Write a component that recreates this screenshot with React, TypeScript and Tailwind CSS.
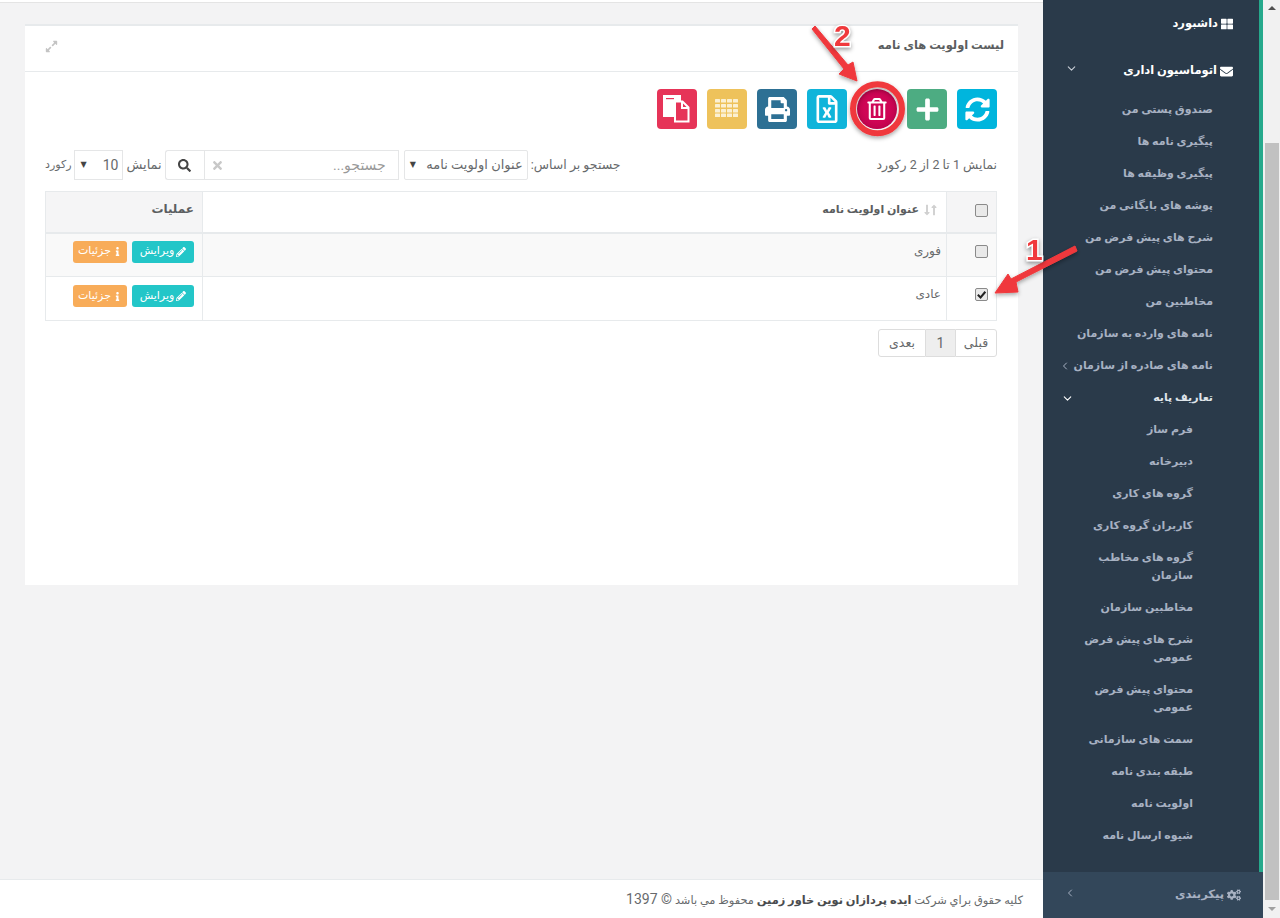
import React from "react";
import { FaSyncAlt, FaPlus, FaRegTrashAlt, FaRegFileExcel, FaPrint, FaThLarge, FaEnvelope, FaPencilAlt, FaInfo, FaCogs, FaSearch, FaTimes, FaExpandAlt, FaLongArrowAltDown, FaLongArrowAltUp } from "react-icons/fa";
import { ChevronDown, ChevronLeft } from "lucide-react";

const font = "font-['Roboto','DejaVu_Sans',sans-serif]";

const sub1 = ["صندوق پستی من", "پیگیری نامه ها", "پیگیری وظیفه ها", "پوشه های بایگانی من", "شرح های پیش فرض من", "محتوای پیش فرض من", "مخاطبین من", "نامه های وارده به سازمان"];
const sub2 = ["فرم ساز", "دبیرخانه", "گروه های کاری", "کاربران گروه کاری", "گروه های مخاطب سازمان", "مخاطبین سازمان", "شرح های پیش فرض عمومی", "محتوای پیش فرض عمومی", "سمت های سازمانی", "طبقه بندی نامه", "اولویت نامه", "شیوه ارسال نامه"];

function SideItem({ label, pr }: { label: string; pr: string }) {
  return (
    <div className={`${pr} py-[7px] pl-[28px] text-[11px] leading-[18px] font-bold text-[#a7b1c2]`}>
      {label}
    </div>
  );
}

function Sidebar() {
  return (
    <aside className="flex h-full w-[220px] shrink-0 flex-col bg-[#2a3a4a]">
      <div className="flex-1 border-r-[4px] border-[#26a98c] pt-[15px]">
        <div className="flex h-[18px] items-center gap-[3px] pr-[26px] text-[11.5px] font-bold text-white">
          <FaThLarge className="text-[12px]" />
          <span>داشبورد</span>
        </div>
        <div className="mt-[29px] flex h-[18px] items-center gap-[3px] pr-[26px] text-[11.5px] font-bold text-white">
          <FaEnvelope className="text-[13px]" />
          <span>اتوماسیون اداری</span>
          <ChevronDown className="mr-auto ml-[22px] h-[13px] w-[13px] -translate-y-[3px] text-[#c8ced6]" />
        </div>
        <div className="mt-[14px]">
          {sub1.map((s) => (
            <SideItem key={s} label={s} pr="pr-[46px]" />
          ))}
          <div className="flex items-center py-[7px] pr-[46px] pl-[16px] text-[11px] leading-[18px] font-bold whitespace-nowrap text-[#a7b1c2]">
            <span>نامه های صادره از سازمان</span>
            <ChevronLeft className="mr-auto h-[12px] w-[12px]" />
          </div>
          <div className="flex items-center py-[7px] pr-[46px] pl-[18px] text-[11px] leading-[18px] font-bold text-[#dfe4ea]">
            <span>تعاریف پایه</span>
            <ChevronDown className="mr-auto h-[13px] w-[13px] text-white" />
          </div>
          {sub2.map((s) => (
            <SideItem key={s} label={s} pr="pr-[66px]" />
          ))}
        </div>
      </div>
      <div className="flex h-[46px] shrink-0 items-center gap-[3px] bg-[#33475a] pr-[22px] pl-[21px] text-[11.5px] font-bold text-[#a7b1c2]">
        <FaCogs className="text-[14px]" />
        <span>پیکربندی</span>
        <ChevronLeft className="mr-auto h-[12px] w-[12px] -translate-y-[2px]" />
      </div>
    </aside>
  );
}

function Tool({ bg, children }: { bg: string; children: React.ReactNode }) {
  return <div className={`${bg} flex h-10 w-10 items-center justify-center text-[25px] text-white`}>{children}</div>;
}

function Box({ className, children }: { className: string; children?: React.ReactNode }) {
  return <div className={`flex h-[30px] items-center border border-[#e5e6e7] bg-white ${className}`}>{children}</div>;
}

function Check({ on }: { on?: boolean }) {
  return (
    <span className="inline-flex h-[13px] w-[13px] items-center justify-center rounded-[2px] border border-[#8a8a8a] bg-[#e9e9e9] align-top">
      {on && (
        <svg viewBox="0 0 12 12" className="h-[11px] w-[11px]">
          <path d="M2 6.2 5 9.2 10.2 3" fill="none" stroke="#222" strokeWidth="2.2" />
        </svg>
      )}
    </span>
  );
}

function CopyIcon() {
  return (
    <svg viewBox="0 0 40 40" className="h-10 w-10">
      <path d="M6 6h18v6h-6.5v16H6z" fill="#fff" />
      <rect x="9" y="9" width="8" height="1.2" fill="#e63458" />
      <path d="M18 12.500h7.500l6 6V32.500H18z" fill="#e63458" stroke="#fff" strokeWidth="2" />
      <path d="M25 13v6h6" fill="none" stroke="#fff" strokeWidth="2" />
    </svg>
  );
}

function GridIcon() {
  const xs = [8, 14, 20, 26];
  const ys = [10, 15, 20, 24.500];
  return (
    <svg viewBox="0 0 40 40" className="h-10 w-10">
      {ys.map((y) => xs.map((x) => <rect key={`${x}-${y}`} x={x} y={y} width="5" height="3.600" rx="0.500" fill="#fbf0d2" />))}
    </svg>
  );
}

function Row({ title, striped }: { title: string; striped?: boolean }) {
  return (
    <tr className={striped ? "bg-[#f9f9f9]" : "bg-white"}>
      <td className="h-[44px] border border-[#e7eaec] pt-[11px] pr-[8px] text-right align-top">
        <Check on={!striped} />
      </td>
      <td className="border border-[#e7eaec] pt-[8px] pr-[5px] align-top text-[12px] leading-[18px] text-[#676a6c]">{title}</td>
      <td className={`border border-[#e7eaec] pr-[8px] align-top ${striped ? "pt-[7px]" : "pt-[8px]"}`}>
        <div className="flex gap-[5px]">
          <span className="flex h-[22px] w-[62px] items-center justify-center gap-[2px] rounded-[3px] bg-[#23c6c8] text-[11px] text-white">
            <FaPencilAlt className="text-[10px]" />ویرایش
          </span>
          <span className="flex h-[22px] w-[54px] items-center justify-center gap-[2px] rounded-[3px] bg-[#f8ac59] text-[11px] text-white">
            <FaInfo className="text-[9px]" />جزئیات
          </span>
        </div>
      </td>
    </tr>
  );
}

function Arrow({ points }: { points: string }) {
  return <polygon points={points} fill="#f0393c" stroke="#f0393c" strokeWidth="1" strokeLinejoin="round" />;
}

function Annotations() {
  return (
    <>
      <svg className="pointer-events-none absolute top-0 left-0 h-[918px] w-[1280px]" viewBox="0 0 1280 918">
        <defs>
          <filter id="sh" x="-30%" y="-30%" width="160%" height="160%">
            <feDropShadow dx="0" dy="2" stdDeviation="2" floodColor="#000" floodOpacity="0.35" />
          </filter>
        </defs>
        <g filter="url(#sh)">
          <Arrow points="812,29 815,26 848,65 853,62 857,81 839,74 844,69" />
          <Arrow points="1075,246 1077,251 1016,282 1018,292 995,293 1008,274 1011,279" />
          <circle cx="877.5" cy="108.700" r="24.500" fill="none" stroke="#f0393c" strokeWidth="6" />
        </g>
      </svg>
      <span className="absolute top-[20px] left-[834px] font-['Liberation_Sans',sans-serif] text-[30px] leading-[32px] font-bold text-[#f0393c] [paint-order:stroke] [-webkit-text-stroke:3px_white] drop-shadow-[0_2px_2px_rgba(0,0,0,0.4)]">2</span>
      <span className="absolute top-[234px] left-[1026px] font-['Liberation_Sans',sans-serif] text-[30px] leading-[32px] font-bold text-[#f0393c] [paint-order:stroke] [-webkit-text-stroke:3px_white] drop-shadow-[0_2px_2px_rgba(0,0,0,0.4)]">1</span>
    </>
  );
}

export default function App() {
  return (
    <div dir="rtl" className={`${font} relative flex h-[918px] w-[1280px] overflow-hidden bg-[#f3f3f4] text-[#676a6c]`}>
      <div className="flex h-full w-[17px] shrink-0 flex-col items-center bg-[#f1f1f1]">
        <span className="mt-[6px] h-0 w-0 border-x-[4px] border-b-[4px] border-x-transparent border-b-[#505050]" />
        <span className="mt-[133px] h-[757px] w-[14px] bg-[#c1c1c1]" />
        <span className="mt-[7px] h-0 w-0 border-x-[4px] border-t-[4px] border-x-transparent border-t-[#a0a0a0]" />
      </div>
      <Sidebar />
      <main className="flex h-full min-w-0 flex-1 flex-col">
        <div className="h-[3px] shrink-0 border-b border-[#e4e4e4] bg-white" />
        <div className="flex-1 pt-[21px] pr-[25px] pl-[25px]">
          <section className="h-[561px] border-t-[2px] border-[#e7eaec] bg-white">
            <header className="flex h-[46px] items-center justify-between border-b border-[#e7eaec] pr-[14px] pb-[5px] pl-[20px]">
              <h1 className="text-[11.5px] font-bold text-[#5b5e60]">لیست اولویت های نامه</h1>
              <FaExpandAlt className="text-[13px] text-[#c4c4c4]" />
            </header>
            <div className="pt-[17px] pr-[21px] pl-[20px]">
              <div className="flex gap-[10px]">
                <Tool bg="rounded-[4px] bg-[#00b5dd]"><FaSyncAlt /></Tool>
                <Tool bg="rounded-[4px] bg-[#4dac82]"><FaPlus /></Tool>
                <Tool bg="rounded-full bg-[radial-gradient(circle,#cf0555_45%,#ad0044_100%)]"><FaRegTrashAlt className="text-[22px]" /></Tool>
                <Tool bg="rounded-[4px] bg-[#10b4da]"><FaRegFileExcel className="text-[28px]" /></Tool>
                <Tool bg="rounded-[4px] bg-[#2d7094]"><FaPrint /></Tool>
                <Tool bg="rounded-[4px] bg-[#eec25b]"><GridIcon /></Tool>
                <Tool bg="rounded-[4px] bg-[#e63458]"><CopyIcon /></Tool>
              </div>
              <div className="mt-[21px] flex h-[30px] items-center text-[12.5px]">
                <span className="text-[#676a6c]">نمایش 1 تا 2 از 2 رکورد</span>
                <span className="mr-auto">جستجو بر اساس:</span>
                <Box className="mr-[3px] w-[124px] justify-between rounded-[2px] pr-[4px] pl-[5px] text-[13px]">
                  <span>عنوان اولویت نامه</span>
                  <span className="text-[8px] text-[#444]">▼</span>
                </Box>
                <Box className="mr-[5px] w-[195px] justify-between pr-[12px] pl-[6px] text-[14px] text-[#999]">
                  <span>جستجو...</span>
                  <FaTimes className="text-[13px] text-[#c8c8c8]" />
                </Box>
                <Box className="w-[39px] justify-center rounded-l-[3px] border-r-0 text-[#444]">
                  <FaSearch className="text-[13px]" />
                </Box>
                <span className="mr-[3px] text-[13px]">نمایش</span>
                <Box className="mr-[3px] w-[49px] justify-between pr-[4px] pl-[5px] text-[14px]">
                  <span>10</span>
                  <span className="text-[8px] text-[#444]">▼</span>
                </Box>
                <span className="mr-[3px] text-[11px]">رکورد</span>
              </div>
              <table className="mt-[11px] mr-0 w-[952px] table-fixed border-collapse">
                <thead>
                  <tr className="bg-[#f5f5f6]">
                    <th className="h-[41px] w-[50px] border border-b-2 border-[#e7eaec] pr-[8px] pb-[3px] text-right leading-[13px] font-normal"><Check /></th>
                    <th className="border border-b-2 border-[#e7eaec] bg-white pr-[6px] pb-[3px] text-right text-[11px] font-bold text-[#5b5e60]">
                      <span className="flex items-center gap-[7px]">
                        <span className="flex w-[14px] text-[12px] text-[#d0d0d0]"><FaLongArrowAltUp className="shrink-0" /><FaLongArrowAltDown className="-mr-[5px] shrink-0" /></span>
                        عنوان اولویت نامه
                      </span>
                    </th>
                    <th className="w-[157px] border border-b-2 border-[#e7eaec] pr-[8px] pb-[6px] text-right text-[12px] font-bold text-[#5b5e60]">عملیات</th>
                  </tr>
                </thead>
                <tbody>
                  <Row title="فوری" striped />
                  <Row title="عادی" />
                </tbody>
              </table>
              <div className="mt-[8px] flex h-[28px] w-[119px] text-[12.5px]">
                <span className="flex w-[42px] items-center justify-center rounded-r-[3px] border border-[#ddd] bg-white">قبلی</span>
                <span className="flex w-[29px] items-center justify-center border-y border-[#ddd] bg-[#eee] text-[14px]">1</span>
                <span className="flex w-[48px] items-center justify-center rounded-l-[3px] border border-[#ddd] bg-white">بعدی</span>
              </div>
            </div>
          </section>
        </div>
        <footer className="flex h-[39px] shrink-0 items-center border-t border-[#e7eaec] bg-white pr-[20px] text-[11.4px] text-[#676a6c]">
          <span>
            کلیه حقوق براي شرکت <b className="text-[#4a4c4e]">ایده پردازان نوین خاور زمین</b> محفوظ مي باشد <span className="text-[14px]">© 1397</span>
          </span>
        </footer>
      </main>
      <Annotations />
    </div>
  );
}
